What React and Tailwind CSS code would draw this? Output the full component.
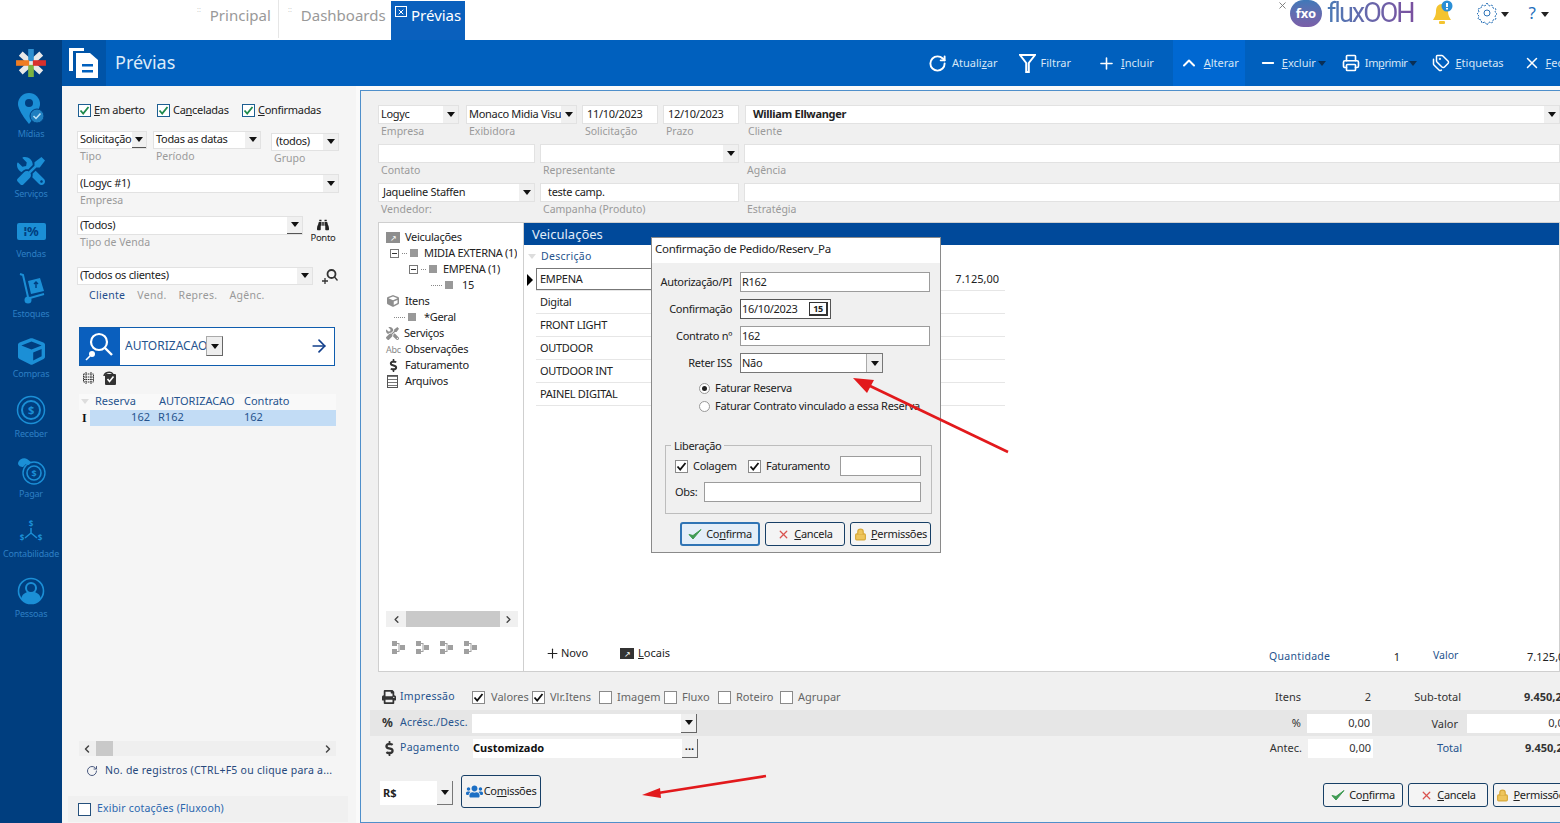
import React from "react";
import { RotateCw, Plus, ChevronUp, Minus, Printer, Tags, X, ArrowRight, ChevronLeft, ChevronRight, Lock } from "lucide-react";
import { FaTools, FaCube, FaBinoculars, FaDollarSign, FaUsers, FaPrint } from "react-icons/fa";

const Caret = ({ className = "" }) => (
  <svg width="8" height="5" viewBox="0 0 8 5" className={className}>
    <path d="M0 0h8L4 5z" fill="currentColor" />
  </svg>
);

const Mark = ({ color = "#1f8a4c" }) => (
  <svg width="11" height="11" viewBox="0 0 11 11">
    <path d="M1.5 5.5 4.2 8.5 9.5 2" fill="none" stroke={color} strokeWidth="1.8" />
  </svg>
);

// caixa de selecao azul do painel de filtros
const BlueCheck = ({ checked = true, children, w }) => (
  <label className="flex items-center gap-[3px] text-[11px] text-[#222]" style={{ width: w }}>
    <span className="w-[13px] h-[13px] border border-[#1d5f92] bg-white flex items-center justify-center">
      {checked && <Mark />}
    </span>
    <span>{children}</span>
  </label>
);

// caixa de selecao cinza, padrao do windows
const GrayCheck = ({ checked, children, className = "" }) => (
  <label className={`flex items-center gap-[5px] text-[11px] ${className}`}>
    <span className="w-[13px] h-[13px] border border-[#8a8a8a] bg-white flex items-center justify-center">
      {checked && <Mark color="#111" />}
    </span>
    <span>{children}</span>
  </label>
);

const Combo = ({ w, h = 19, children, arrow = 15, raised, className = "" }) => (
  <div
    className={`flex items-center bg-white border border-[#e2e2e2] shrink-0 ${className}`}
    style={{ width: w, height: h }}
  >
    <span className="flex-1 min-w-0 pl-[2px] text-[11px] text-[#222] whitespace-nowrap overflow-hidden">{children}</span>
    {arrow > 0 && (
      <span
        className={`h-full flex items-center justify-center text-[#111] bg-[#f0f0f0] ${raised ? "border-b border-[#555]" : ""}`}
        style={{ width: arrow }}
      >
        <Caret />
      </span>
    )}
  </div>
);

const Field = ({ w, text, label, arrow = 0, bold, pad = 0, h = 39 }) => (
  <div className="flex flex-col shrink-0" style={{ width: w, height: h }}>
    <Combo w={w} arrow={arrow}>
      <span className={bold ? "font-bold" : ""} style={{ paddingLeft: pad }}>{text}</span>
    </Combo>
    <span className="pl-[3px] text-[10.5px] leading-[13px] tracking-normal mt-[1px] text-[#9a9a9a]">{label}</span>
  </div>
);

const Label = ({ children }) => (
  <span className="block text-[10.5px] leading-[13px] tracking-normal text-[#9a9a9a] pl-[3px] mt-[1px]">{children}</span>
);

const Btn = ({ w, active, icon, children }) => (
  <button
    className={`h-[24px] flex items-center justify-center gap-[4px] rounded-[3px] text-[11px] text-[#222] shrink-0 ${
      active ? "border-2 border-[#2f74b5] bg-[#e4eef8]" : "border border-[#173f66] bg-[#f4f4f4]"
    }`}
    style={{ width: w }}
  >
    {icon}
    <span>{children}</span>
  </button>
);

const OkIcon = () => (
  <svg width="14" height="12" viewBox="0 0 14 12">
    <path d="M1 6.5 5 11 13 1.5 5 7.5z" fill="#3e9a52" stroke="#3e9a52" strokeWidth="1" />
  </svg>
);
const NoIcon = () => <X size={13} strokeWidth={2.4} className="text-[#d9534f]" />;
const LockIcon = () => <Lock size={13} strokeWidth={2.2} className="text-[#d8a93a]" fill="#eec55c" />;

const SideItem = ({ label, children }) => (
  <div className="h-[60px] shrink-0 flex flex-col items-center justify-end">
    <div className="flex-1 flex items-end justify-center pb-[3px]">{children}</div>
    <span className="text-[9px] leading-[12px] tracking-[-0.2px] mb-[11px] text-[#2d7fc4] whitespace-nowrap">{label}</span>
  </div>
);

const Sidebar = () => (
  <aside className="w-[62px] shrink-0 bg-[#003e7f] flex flex-col overflow-hidden">
    <div className="h-[46px] mb-[5px] shrink-0 flex items-center justify-center">
      <svg width="30" height="28" viewBox="0 0 32 30">
        <path d="M5 5 27 25M27 5 5 25" stroke="#e8e8e8" strokeWidth="6" />
        <rect x="13" y="0" width="6" height="13" fill="#2d8fd0" />
        <rect x="13" y="17" width="6" height="13" fill="#7cb342" />
        <rect x="0" y="12" width="14" height="6" fill="#ef7d22" />
        <rect x="18" y="12" width="14" height="6" fill="#d9302c" />
      </svg>
    </div>
    <SideItem label="Mídias">
      <svg width="28" height="32" viewBox="0 0 28 32">
        <path d="M12 0a11 11 0 0 1 11 11c0 7-11 20-11 20S1 18 1 11A11 11 0 0 1 12 0z" fill="#1b8fd6" />
        <circle cx="12" cy="10" r="4" fill="#003e7f" />
        <circle cx="20" cy="23" r="7" fill="#1f7fc0" stroke="#003e7f" />
        <path d="M16.5 23l2.5 2.5 4.5-5" fill="none" stroke="#bfe3f7" strokeWidth="1.5" />
      </svg>
    </SideItem>
    <SideItem label="Serviços">
      <FaTools size={28} className="text-[#1b8fd6] -scale-x-100" />
    </SideItem>
    <SideItem label="Vendas">
      <div className="w-[29px] h-[17px] mb-[5px] rounded-[2px] bg-[#1b8fd6] text-[#003e7f] text-[13px] leading-[17px] font-bold text-center">⁞%</div>
    </SideItem>
    <SideItem label="Estoques">
      <svg width="28" height="32" viewBox="0 0 28 32">
        <path d="M3 1l3 1 5 22" fill="none" stroke="#1b8fd6" strokeWidth="2" />
        <circle cx="11" cy="27" r="3.5" fill="#1b8fd6" />
        <path d="M13 25 27 21" stroke="#1b8fd6" strokeWidth="2" />
        <path d="M11 8 23 5 27 18 14 21z" fill="#1b8fd6" />
        <path d="M19 9v6M17 11l2-2 2 2" fill="none" stroke="#003e7f" strokeWidth="1.4" />
      </svg>
    </SideItem>
    <SideItem label="Compras">
      <FaCube size={27} className="text-[#1b8fd6]" />
    </SideItem>
    <SideItem label="Receber">
      <svg width="30" height="30" viewBox="0 0 30 30">
        <circle cx="15" cy="15" r="13.5" fill="none" stroke="#1b8fd6" strokeWidth="1.5" />
        <circle cx="15" cy="15" r="9" fill="none" stroke="#1b8fd6" strokeWidth="2" />
        <text x="15" y="19" textAnchor="middle" fontSize="11" fontWeight="700" fill="#1b8fd6">$</text>
      </svg>
    </SideItem>
    <SideItem label="Pagar">
      <svg width="30" height="30" viewBox="0 0 30 30">
        <path d="M2 8c1-4 6-6 9-4l4 3-2 3-3-1-3 3C5 12 2 11 2 8z" fill="#1b8fd6" />
        <circle cx="18" cy="18" r="11" fill="none" stroke="#1b8fd6" strokeWidth="1.4" />
        <circle cx="18" cy="18" r="7" fill="none" stroke="#1b8fd6" strokeWidth="1.6" />
        <text x="18" y="21.5" textAnchor="middle" fontSize="9" fontWeight="700" fill="#1b8fd6">$</text>
      </svg>
    </SideItem>
    <SideItem label="Contabilidade">
      <svg width="26" height="26" viewBox="0 0 26 26">
        <path d="M13 9v5L7 19M13 14l6 5" fill="none" stroke="#1b8fd6" strokeWidth="1.5" />
        <text x="13" y="8" textAnchor="middle" fontSize="8" fontWeight="700" fill="#1b8fd6">$</text>
        <text x="4" y="22" textAnchor="middle" fontSize="8" fontWeight="700" fill="#1b8fd6">$</text>
        <text x="22" y="22" textAnchor="middle" fontSize="8" fontWeight="700" fill="#1b8fd6">$</text>
      </svg>
    </SideItem>
    <SideItem label="Pessoas">
      <svg width="28" height="28" viewBox="0 0 28 28">
        <circle cx="14" cy="14" r="12.5" fill="none" stroke="#1b8fd6" strokeWidth="1.6" />
        <circle cx="14" cy="11" r="5" fill="none" stroke="#1b8fd6" strokeWidth="2" />
        <path d="M4 22c1-5 5-7 7-7h6c2 0 6 2 7 7-3 3-6 5-10 5s-7-2-10-5z" fill="#1b8fd6" />
      </svg>
    </SideItem>
  </aside>
);

const TopBar = () => (
  <div className="h-10 flex items-start bg-white shrink-0 relative tracking-normal">
    <div className="pl-[197px] flex h-full">
      <div className="flex pt-[6px] border-r border-[#e6e6e6] w-[82px] h-[38px]">
        <span className="text-[7px] leading-[7px] text-[#ccc] mr-[9px]">::</span>
        <span className="text-[15px] leading-[19px] text-[#999]">Principal</span>
      </div>
      <div className="flex pt-[6px] pl-[9px] w-[112px]">
        <span className="text-[7px] leading-[7px] text-[#ccc] mr-[9px]">::</span>
        <span className="text-[15px] leading-[19px] text-[#999]">Dashboards</span>
      </div>
      <div className="mt-[1px] h-[39px] w-[74px] bg-[#0a60bd] flex items-start pl-[4px] pt-[4px] gap-[4px]">
        <span className="mt-[1px] w-[12px] h-[11px] border border-white flex items-center justify-center">
          <X size={8} strokeWidth={3} className="text-white" />
        </span>
        <span className="text-[15px] leading-[20px] text-white">Prévias</span>
      </div>
    </div>
    <div className="ml-auto flex items-start h-full pr-[11px]">
      <X size={11} className="text-[#777] mr-[2px] mt-0" />
      <div className="w-[32px] h-[27px] rounded-full bg-gradient-to-b from-[#3f78b8] to-[#7a5fa8] text-white text-[13px] font-bold flex items-center justify-center">fxo</div>
      <span className="ml-[5px] text-[27px] leading-[27px] font-['Roboto',sans-serif] font-normal tracking-[-2px] bg-gradient-to-r from-[#4a7ab5] to-[#7a4f9f] bg-clip-text text-transparent pr-[2px]">fluxOOH</span>
      <svg width="24" height="26" viewBox="0 0 24 26" className="ml-[15px]">
        <path d="M11 4c-4 0-6 3-6 7 0 5-2 7-3 9h18c-1-2-3-4-3-9 0-4-2-7-6-7z" fill="#f4c430" />
        <rect x="8" y="21" width="6" height="3" rx="1" fill="#f4c430" />
        <circle cx="16" cy="6" r="5.5" fill="#2b8fd6" />
        <rect x="15" y="3" width="2" height="4" fill="#fff" />
        <rect x="15" y="8" width="2" height="1.5" fill="#fff" />
      </svg>
      <svg width="24" height="24" viewBox="0 0 24 24" className="ml-[20px] mt-[1px] text-[#2a72b8]">
        <circle cx="12" cy="12" r="3" fill="none" stroke="currentColor" />
        <path d="M12 2l2 3 3-1 1 3 3 1-1 3 2 2-2 2 1 3-3 1-1 3-3-1-2 3-2-3-3 1-1-3-3-1 1-3-2-2 2-2-1-3 3-1 1-3 3 1z" fill="none" stroke="currentColor" strokeDasharray="2 1" />
      </svg>
      <Caret className="mt-[12px] ml-[2px] text-[#222]" />
      <span className="ml-[20px] mt-[2px] text-[17px] leading-[22px] text-[#1f6fbd]">?</span>
      <Caret className="mt-[12px] ml-[5px] text-[#222]" />
    </div>
  </div>
);

const Tool = ({ icon, children, caret, active, ml = 0, w }) => (
  <div
    className={`h-full flex items-center gap-[5px] shrink-0 text-[11px] tracking-normal text-[#d6e6f6] ${active ? "bg-[#0068d2] justify-center" : ""}`}
    style={{ marginLeft: ml, width: w }}
  >
    {icon}
    <span className="whitespace-nowrap">{children}</span>
    {caret && <Caret className="-ml-[3px] text-[#0a2f55]" />}
  </div>
);

const Funnel = () => (
  <svg width="17" height="19" viewBox="0 0 17 19" className="text-white">
    <path d="M1 1h15L9.8 9v9H7.2V9z" fill="none" stroke="currentColor" strokeWidth="2" />
  </svg>
);

const Header = () => (
  <header className="h-[46px] shrink-0 bg-[#0060be] flex items-stretch overflow-hidden">
    <div className="w-[44px] shrink-0 bg-[#0054a8] flex items-center justify-center">
      <svg width="32" height="32" viewBox="0 0 32 32">
        <path d="M1 1h15v3H5v20H1z" fill="#fff" />
        <path d="M8 6h14l8 7v18H8z" fill="#fff" />
        <rect x="14" y="17" width="11" height="2.5" fill="#0060be" />
        <rect x="14" y="23" width="11" height="2.5" fill="#0060be" />
      </svg>
    </div>
    <div className="w-[700px] pl-[9px] pb-[2px] shrink-0 flex items-center text-[18px] tracking-normal text-[#dcebf9]">Prévias</div>
    <nav className="flex items-stretch ml-[122px] shrink-0">
      <Tool icon={<RotateCw size={19} strokeWidth={2.4} className="text-white" />}>Atuali<u>z</u>ar</Tool>
      <Tool ml={21} icon={<Funnel />}>Filtrar</Tool>
      <Tool ml={26} icon={<Plus size={19} strokeWidth={2} className="text-white" />}><u>I</u>ncluir</Tool>
      <Tool ml={19} w={72} active icon={<ChevronUp size={20} strokeWidth={2.4} className="text-white" />}><u>A</u>lterar</Tool>
      <Tool ml={14} icon={<Minus size={18} strokeWidth={2.4} className="text-white" />} caret><u>E</u>xcluir</Tool>
      <Tool ml={16} icon={<Printer size={18} strokeWidth={2.2} className="text-white" />} caret><span className="tracking-[-0.4px]">Im<u>p</u>rimir</span></Tool>
      <Tool ml={15} icon={<Tags size={18} strokeWidth={2} className="text-white" />}><u>E</u>tiquetas</Tool>
      <Tool ml={19} icon={<X size={18} strokeWidth={2} className="text-white" />}><u>F</u>echar</Tool>
    </nav>
  </header>
);

const LeftPanel = () => (
  <section className="w-[298px] shrink-0 bg-[#f5f5f5] border-r-4 border-[#fafafa] flex flex-col pl-[15px] pb-[1px]">
    <div className="flex mt-[16px] pl-[1px]">
      <BlueCheck w={79}><u>E</u>m aberto</BlueCheck>
      <BlueCheck w={85}>Ca<u>n</u>celadas</BlueCheck>
      <BlueCheck w={90}><u>C</u>onfirmadas</BlueCheck>
    </div>
    <div className="flex mt-[12px] h-[32px]">
      <div className="w-[76px]">
        <Combo w={70} h={18} arrow={14} raised>Solicitação</Combo>
        <Label>Tipo</Label>
      </div>
      <div className="w-[118px]">
        <Combo w={108} h={18}>Todas as datas</Combo>
        <Label>Período</Label>
      </div>
      <div className="mt-[2px]">
        <Combo w={68} h={18}><span className="pl-[2px]">(todos)</span></Combo>
        <Label>Grupo</Label>
      </div>
    </div>
    <div className="mt-[11px]">
      <Combo w={262}>(Logyc #1)</Combo>
      <Label>Empresa</Label>
    </div>
    <div className="flex mt-[9px] h-[33px]">
      <div>
        <Combo w={226} raised>(Todos)</Combo>
        <Label>Tipo de Venda</Label>
      </div>
      <div className="ml-[7px] mt-[3px] flex flex-col items-center text-[#222] w-[26px]">
        <FaBinoculars size={12} />
        <span className="text-[9.5px] leading-[12px] mt-[1px]">Ponto</span>
      </div>
    </div>
    <div className="flex items-center mt-[18px]">
      <Combo w={236} h={18}>(Todos os clientes)</Combo>
      <svg width="16" height="16" viewBox="0 0 16 16" className="ml-[9px] text-[#333]">
        <circle cx="9.5" cy="6" r="4" fill="none" stroke="currentColor" strokeWidth="1.8" />
        <path d="M12.5 9l3 3.5M0 13h6M3 10v6" stroke="currentColor" strokeWidth="1.3" />
      </svg>
    </div>
    <div className="flex mt-[4px] pl-[12px] text-[10.5px] leading-[13px] tracking-[0.3px] text-[#999] gap-[12px]">
      <span className="text-[#1f4e8c]">Cliente</span>
      <span>Vend.</span>
      <span>Repres.</span>
      <span>Agênc.</span>
    </div>
    <div className="ml-[2px] mt-[25px] w-[256px] h-[39px] shrink-0 border border-[#0f5dae] bg-white flex items-center">
      <div className="w-[40px] h-full bg-[#0a5fbe] flex items-center justify-center">
        <svg width="32" height="32" viewBox="0 0 32 32">
          <circle cx="15" cy="12" r="8" fill="none" stroke="#fff" strokeWidth="2.2" />
          <path d="M21 18l7 7" stroke="#fff" strokeWidth="2.4" />
          <circle cx="8" cy="24" r="3" fill="#fff" />
          <path d="M2 30l4-4" stroke="#fff" strokeWidth="1.6" />
        </svg>
      </div>
      <span className="ml-[5px] w-[81px] overflow-hidden whitespace-nowrap text-[12px] tracking-normal text-[#26548e]">AUTORIZACAO</span>
      <span className="w-[17px] h-[20px] bg-[#eee] border border-[#aaa] border-r-[#666] border-b-[#666] flex items-center justify-center text-[#111]">
        <Caret />
      </span>
      <ArrowRight size={20} strokeWidth={2} className="ml-auto mr-[5px] text-[#123f8c]" />
    </div>
    <div className="flex h-[15px] mt-[5px] pl-[5px] gap-[8px] text-[#333]">
      <svg width="13" height="14" viewBox="0 0 13 14">
        <path d="M1.5 3h10v8h-10zM1.5 6h10M1.5 8.5h10M4 1v12M9 1v12" fill="none" stroke="currentColor" strokeWidth="1" strokeDasharray="1.5 .7" />
      </svg>
      <svg width="14" height="14" viewBox="0 0 14 14">
        <rect x="2" y="3" width="11" height="11" rx="1" fill="currentColor" />
        <path d="M1 5a5 4 0 0 1 9-2" fill="none" stroke="currentColor" strokeWidth="1.5" />
        <path d="M4.5 8l2 2.5 4-5" fill="none" stroke="#fff" strokeWidth="1.6" />
      </svg>
    </div>
    <div className="ml-[2px] mt-[8px] w-[257px] text-[11px] tracking-normal">
      <div className="flex h-[16px] items-center text-[#26548e] bg-[#f9f9f9]">
        <span className="w-[11px] flex justify-center text-[#ddd]"><Caret /></span>
        <span className="w-[65px] pl-[5px]">Reserva</span>
        <span className="w-[85px] pl-[4px]">AUTORIZACAO</span>
        <span className="pl-[4px]">Contrato</span>
      </div>
      <div className="flex h-[16px] items-center text-[#26548e]">
        <span className="w-[11px] pl-[3px] text-[12px] font-['Liberation_Serif',serif] font-bold text-[#111]">I</span>
        <div className="flex-1 h-full bg-[#c2dcf5] flex items-center">
          <span className="w-[60px] text-right">162</span>
          <span className="w-[85px] pl-[8px]">R162</span>
          <span className="pl-[9px]">162</span>
        </div>
      </div>
    </div>
    <div className="mt-auto ml-[2px] w-[257px] h-[15px] bg-[#efefef] flex items-center">
      <ChevronLeft size={12} strokeWidth={3} className="ml-[2px] text-[#444]" />
      <span className="ml-[3px] w-[17px] h-full bg-[#c9c9c9]" />
      <ChevronRight size={12} strokeWidth={3} className="ml-auto mr-[2px] text-[#444]" />
    </div>
    <div className="flex items-center h-[14px] mt-[8px] pl-[9px] gap-[7px] text-[10.5px] tracking-[0.25px] text-[#26487c] whitespace-nowrap">
      <RotateCw size={12} strokeWidth={2} className="text-[#4a5a80]" />
      <span>No. de registros (CTRL+F5 ou clique para a...</span>
    </div>
    <div className="-ml-[9px] w-[280px] h-[26px] mt-[18px] bg-[#f0f0f0] flex items-center pl-[10px] gap-[6px] text-[10.5px] tracking-[0.2px] text-[#2a66ae]">
      <span className="w-[13px] h-[13px] border border-[#25507c] bg-white" />
      <span>Exibir cotações (Fluxooh)</span>
    </div>
  </section>
);

const TreeIcon = () => <span className="inline-block w-[8px] h-[8px] bg-[#999] shrink-0" />;
const Expander = () => (
  <span className="w-[9px] h-[9px] border border-[#777] bg-white shrink-0 flex items-center justify-center">
    <span className="w-[5px] h-px bg-[#333]" />
  </span>
);
const Dots = ({ w = 5 }) => <span className="border-t border-dotted border-[#888] shrink-0" style={{ width: w }} />;

const TreeRow = ({ pad, children }) => (
  <div className="h-[16px] flex items-center gap-[3px] text-[11px] text-[#222] whitespace-nowrap" style={{ paddingLeft: pad }}>
    {children}
  </div>
);

const Tree = () => (
  <div className="w-[145px] shrink-0 border-r border-[#cfcfcf] flex flex-col pt-[6px]">
    <TreeRow pad={7}>
      <span className="w-[14px] h-[11px] bg-[#8e8e8e] text-white text-[8px] leading-[11px] text-center shrink-0 mr-[2px]">↗</span>Veiculações
    </TreeRow>
    <TreeRow pad={11}>
      <Expander /><Dots /><TreeIcon /><span className="ml-[3px] w-[93px] overflow-hidden">MIDIA EXTERNA (1)</span>
    </TreeRow>
    <TreeRow pad={30}>
      <Expander /><Dots /><TreeIcon /><span className="ml-[3px]">EMPENA (1)</span>
    </TreeRow>
    <TreeRow pad={52}>
      <Dots w={11} /><TreeIcon /><span className="ml-[6px]">15</span>
    </TreeRow>
    <TreeRow pad={8}>
      <FaCube size={12} className="text-[#8e8e8e] mr-[3px]" />Itens
    </TreeRow>
    <TreeRow pad={15}>
      <Dots w={11} /><TreeIcon /><span className="ml-[5px]">*Geral</span>
    </TreeRow>
    <TreeRow pad={7}>
      <FaTools size={13} className="text-[#8e8e8e] mr-[2px] -scale-x-100" />Serviços
    </TreeRow>
    <TreeRow pad={7}>
      <span className="w-[14px] text-[9px] leading-[11px] text-[#888] mr-[2px] shrink-0">Abc</span>Observações
    </TreeRow>
    <TreeRow pad={9}>
      <FaDollarSign size={13} className="text-[#333] mr-[2px] -ml-[1px]" />Faturamento
    </TreeRow>
    <TreeRow pad={8}>
      <span className="w-[11px] h-[13px] border border-[#555] bg-[repeating-linear-gradient(#777_0_1px,#fff_1px_3px)] mr-[4px] shrink-0" />Arquivos
    </TreeRow>
    <div className="mt-auto mx-[7px] w-[132px] h-[16px] bg-[#f0f0f0] flex items-center justify-between">
      <ChevronLeft size={11} strokeWidth={3} className="ml-[5px] text-[#444] shrink-0" />
      <span className="w-[94px] h-full bg-[#c9c9c9]" />
      <ChevronRight size={11} strokeWidth={3} className="mr-[4px] text-[#444] shrink-0" />
    </div>
    <div className="flex h-[14px] mt-[14px] mb-[16px] pl-[13px] gap-[10px]">
      {[0, 1, 2, 3].map((i) => (
        <svg key={i} width="14" height="14" viewBox="0 0 14 14">
          <rect x="0" y="0" width="5" height="5" fill="#a0a0a0" />
          <rect x="0" y="8" width="5" height="5" fill="#a0a0a0" />
          <rect x="8" y="4" width="5" height="5" fill="#a0a0a0" />
          <path d="M5 2.5h2M5 10.5h2M7 2v9" stroke="#a0a0a0" />
        </svg>
      ))}
    </div>
  </div>
);

const rows = ["Digital", "FRONT LIGHT", "OUTDOOR", "OUTDOOR INT", "PAINEL DIGITAL"];

const Veiculacoes = () => (
  <div className="flex-1 min-w-0 flex flex-col text-[11px] text-[#222]">
    <div className="h-[22px] bg-[#00499a] text-[13px] leading-[22px] tracking-normal text-[#e0ecf8] pl-[8px] shrink-0">Veiculações</div>
    <div className="h-[23px] flex items-center text-[#26548e] shrink-0">
      <span className="w-[17px] pl-[4px] text-[#ddd]"><Caret /></span>
      <span className="text-[10.5px] tracking-[0.3px]">Descrição</span>
    </div>
    <div className="w-[481px] shrink-0">
      <div className="h-[23px] flex items-center">
        <svg width="12" height="12" viewBox="0 0 12 12" className="shrink-0">
          <path d="M3 0l6 6-6 6z" fill="#000" />
        </svg>
        <div className="flex-1 h-full flex items-center pr-[6px] border-b border-[#e6e6e6]">
          <span className="w-[120px] h-full border border-[#777] flex items-center pl-[3px]">EMPENA</span>
          <span className="ml-auto tracking-normal">7.125,00</span>
        </div>
      </div>
      {rows.map((row) => (
        <div key={row} className="h-[23px] ml-[12px] pl-[4px] flex items-center border-b border-[#e6e6e6]">{row}</div>
      ))}
    </div>
    <div className="mt-auto mb-[5px] h-[18px] flex items-center tracking-normal">
      <span className="ml-[21px] flex items-center gap-[1px] -mt-[8px] shrink-0">
        <Plus size={15} strokeWidth={1.8} />
        <span>Novo</span>
      </span>
      <span className="ml-[32px] flex items-center gap-[4px] -mt-[8px] shrink-0">
        <span className="w-[14px] h-[11px] bg-[#333] text-white text-[8px] leading-[11px] text-center">↗</span>
        <span><u>L</u>ocais</span>
      </span>
      <span className="ml-[599px] w-[70px] shrink-0 text-[#26548e] text-[10.5px] tracking-[0.3px]">Quantidade</span>
      <span className="w-[61px] shrink-0 text-right">1</span>
      <span className="ml-[33px] w-[60px] shrink-0 text-[#26548e] text-[10.5px] -mt-[2px]">Valor</span>
      <span className="ml-[34px] shrink-0 whitespace-nowrap">7.125,00</span>
    </div>
  </div>
);

const White = ({ w, children }) => (
  <span className="h-[19px] bg-white flex items-center justify-end pr-[2px] text-[11px] shrink-0" style={{ width: w }}>{children}</span>
);

const Footer = () => (
  <div className="flex-1 flex flex-col pt-[16px] text-[11px] tracking-normal text-[#333] whitespace-nowrap">
    <div className="h-[18px] flex items-center pl-[21px] -mr-[8px]">
      <FaPrint size={14} className="text-[#333] shrink-0" />
      <span className="ml-[4px] w-[72px] text-[#26548e] text-[10.5px] tracking-[0.3px]">Impressão</span>
      <GrayCheck checked className="w-[60px] gap-[6px] text-[#666]">Valores</GrayCheck>
      <GrayCheck checked className="w-[67px] text-[#666]">Vlr.Itens</GrayCheck>
      <GrayCheck className="w-[65px] text-[#666]">Imagem</GrayCheck>
      <GrayCheck className="w-[54px] text-[#666]">Fluxo</GrayCheck>
      <GrayCheck className="w-[62px] text-[#666]">Roteiro</GrayCheck>
      <GrayCheck className="text-[#666]">Agrupar</GrayCheck>
      <span className="ml-auto">Itens</span>
      <span className="w-[70px] text-right">2</span>
      <span className="w-[90px] text-right">Sub-total</span>
      <span className="ml-[63px] font-bold">9.450,20</span>
    </div>
    <div className="ml-[9px] mt-[4px] h-[26px] bg-[#e6e6e6] flex items-center pl-[12px]">
      <span className="w-[18px] text-[12px] font-bold text-[#333]">%</span>
      <span className="w-[72px] text-[#26548e] text-[10.5px] tracking-[0.2px]">Acrésc./Desc.</span>
      <span className="w-[225px] h-[19px] bg-white flex justify-end">
        <span className="w-[16px] h-full bg-[#f0f0f0] border-r border-b border-[#666] flex items-center justify-center text-[#111]"><Caret /></span>
      </span>
      <span className="ml-auto w-[38px] text-right">%</span>
      <span className="ml-[6px]"><White w={65}>0,00</White></span>
      <span className="w-[86px] text-right pt-[2px]">Valor</span>
      <span className="ml-[9px] mr-[-37px]"><White w={130}><span className="pr-[25px]">0,00</span></White></span>
    </div>
    <div className="h-[20px] mt-[2px] flex items-center pl-[21px] -mr-[9px]">
      <FaDollarSign size={15} className="text-[#333] shrink-0" />
      <span className="ml-[3px] w-[73px] text-[#26548e] text-[10.5px] tracking-[0.3px]">Pagamento</span>
      <span className="w-[225px] h-[19px] bg-white flex items-center font-bold text-[#111] pr-0">
        <span className="flex-1">Customizado</span>
        <span className="w-[16px] h-full bg-[#f0f0f0] border-r border-b border-[#666] text-center leading-[14px] font-bold">...</span>
      </span>
      <span className="ml-auto">Antec.</span>
      <span className="ml-[6px]"><White w={65}>0,00</White></span>
      <span className="w-[89px] text-right text-[#26548e]">Total</span>
      <span className="ml-[63px] font-bold">9.450,20</span>
    </div>
    <div className="flex mt-[17px] pl-[19px]">
      <div className="mt-[6px] h-[24px] w-[73px] shrink-0 bg-white flex items-center font-bold text-[#222] pl-[3px]">
        <span className="flex-1">R$</span>
        <span className="w-[16px] h-full bg-[#f0f0f0] border-r border-b border-[#777] flex items-center justify-center text-[#111]"><Caret /></span>
      </div>
      <button className="ml-[8px] w-[80px] h-[33px] shrink-0 rounded-[3px] border border-[#173f66] bg-[#f2f2f2] flex items-center justify-center gap-[1px] text-[11px] text-[#222] tracking-[-0.3px]">
        <FaUsers size={17} className="text-[#1c6fc4]" />
        <span>Co<u>m</u>issões</span>
      </button>
      <div className="ml-[782px] mt-[8px] flex gap-[5px] shrink-0 tracking-[-0.3px]">
        <Btn w={80} icon={<OkIcon />}>Co<u>n</u>firma</Btn>
        <Btn w={80} icon={<NoIcon />}><u>C</u>ancela</Btn>
        <Btn w={80} icon={<LockIcon />}><u>P</u>ermissões</Btn>
      </div>
    </div>
  </div>
);

const RightPanel = () => (
  <section className="w-[1200px] shrink-0 mt-[4px] border-t border-l border-b border-[#4f8fca] bg-[#f0f0f0] flex flex-col overflow-hidden">
    <div className="pl-[17px] pt-[14px]">
      <div className="flex">
        <Field w={81} text="Logyc" label="Empresa" arrow={15} />
        <span className="w-[7px]" />
        <Field w={111} text="Monaco Midia Visual" label="Exibidora" arrow={15} />
        <span className="w-[5px]" />
        <Field w={76} text="11/10/2023" label="Solicitação" pad={2} />
        <span className="w-[5px]" />
        <Field w={76} text="12/10/2023" label="Prazo" pad={2} />
        <span className="w-[6px]" />
        <Field w={815} text="William Ellwanger" label="Cliente" arrow={15} bold pad={5} />
      </div>
      <div className="flex">
        <Field w={157} text="" label="Contato" />
        <span className="w-[5px]" />
        <Field w={199} text="" label="Representante" arrow={15} />
        <span className="w-[5px]" />
        <Field w={816} text="" label="Agência" />
      </div>
      <div className="flex">
        <Field w={157} text="Jaqueline Staffen" label="Vendedor:" arrow={15} pad={2} />
        <span className="w-[5px]" />
        <Field w={199} text="teste camp." label="Campanha (Produto)" pad={5} />
        <span className="w-[5px]" />
        <Field w={816} text="" label="Estratégia" />
      </div>
    </div>
    <div className="ml-[17px] h-[450px] shrink-0 border border-[#cfcfcf] bg-white flex">
      <Tree />
      <Veiculacoes />
    </div>
    <Footer />
  </section>
);

const DlgRow = ({ label, children, mt = 0 }) => (
  <div className="flex items-center" style={{ marginTop: mt }}>
    <span className="w-[88px] text-right text-[11px] text-[#222] pr-[8px] whitespace-nowrap">{label}</span>
    {children}
  </div>
);

const DlgInput = ({ w, h = 19, children }) => (
  <span className="bg-white border border-[#9c9c9c] flex items-center pl-[1px] text-[11px] text-[#222] shrink-0" style={{ width: w, height: h }}>{children}</span>
);

const Radio = ({ on, children }) => (
  <div className="flex items-center h-[18px] gap-[5px] text-[11px] text-[#222] pl-[47px]">
    <span className="w-[11px] h-[11px] rounded-full border border-[#999] bg-white flex items-center justify-center">
      {on && <span className="w-[5px] h-[5px] rounded-full bg-[#222]" />}
    </span>
    <span>{children}</span>
  </div>
);

const Dialog = () => (
  <div className="absolute left-[651px] top-[237px] w-[290px] h-[316px] bg-[#f0f0f0] border border-[#8a8a8a] flex flex-col z-10">
    <div className="h-[25px] shrink-0 bg-white pl-[3px] pb-[3px] flex items-center text-[11.5px] text-[#222]">Confirmação de Pedido/Reserv_Pa</div>
    <DlgRow label="Autorização/PI" mt={9}><DlgInput w={190} h={20}>R162</DlgInput></DlgRow>
    <DlgRow label="Confirmação" mt={7}>
      <span className="w-[91px] h-[20px] bg-white border border-[#555] flex items-center justify-between pl-[1px] pr-[2px] text-[11px] text-[#222]">
        16/10/2023
        <span className="w-[19px] h-[14px] border border-[#333] border-r-2 border-b-2 text-[9px] leading-[12px] text-center font-bold">15</span>
      </span>
    </DlgRow>
    <DlgRow label="Contrato nº" mt={7}><DlgInput w={190} h={20}>162</DlgInput></DlgRow>
    <DlgRow label="Reter ISS" mt={7}>
      <span className="w-[143px] h-[20px] bg-white border border-[#777] flex items-center justify-between pl-[1px] text-[11px] text-[#222]">
        Não
        <span className="w-[16px] h-full bg-[#eee] border-l border-[#aaa] flex items-center justify-center text-[#111]"><Caret /></span>
      </span>
    </DlgRow>
    <div className="mt-[6px]">
      <Radio on>Faturar Reserva</Radio>
      <Radio>Faturar Contrato vinculado a essa Reserva</Radio>
    </div>
    <fieldset className="ml-[13px] mr-[8px] mt-[24px] h-[75px] border border-[#bdbdbd] px-[9px] pt-[4px] min-w-0">
      <legend className="-ml-[4px] px-[3px] text-[11px] leading-[13px] text-[#222]">Liberação</legend>
      <div className="flex items-center h-[20px] text-[#222]">
        <GrayCheck checked className="w-[73px]">Colagem</GrayCheck>
        <GrayCheck checked className="w-[92px]">Faturamento</GrayCheck>
        <DlgInput w={81} h={20} />
      </div>
      <div className="flex items-center mt-[6px] text-[11px] text-[#222]">
        <span className="w-[29px]">Obs:</span>
        <DlgInput w={217} h={20} />
      </div>
    </fieldset>
    <div className="flex gap-[5px] pl-[28px] mt-[8px]">
      <Btn w={80} active icon={<OkIcon />}>Co<u>n</u>firma</Btn>
      <Btn w={80} icon={<NoIcon />}><u>C</u>ancela</Btn>
      <Btn w={81} icon={<LockIcon />}><u>P</u>ermissões</Btn>
    </div>
  </div>
);

// setas vermelhas desenhadas por cima da tela
const Arrows = () => (
  <svg className="absolute inset-0 z-20 pointer-events-none" width="1560" height="823" viewBox="0 0 1560 823">
    <path d="M1008 452 868 385" stroke="#e2191c" strokeWidth="2.6" fill="none" />
    <path d="M853 378 874 380 867 393z" fill="#e2191c" />
    <path d="M766 776 658 793" stroke="#e2191c" strokeWidth="2.6" fill="none" />
    <path d="M642 795 660 788 661 798z" fill="#e2191c" />
  </svg>
);

export default function App() {
  return (
    <div className="relative w-[1560px] h-[823px] overflow-hidden bg-white flex flex-col tracking-[-0.3px] font-['Noto_Sans',sans-serif]">
      <TopBar />
      <div className="flex flex-1 min-h-0">
        <Sidebar />
        <div className="flex-1 min-w-0 flex flex-col bg-[#fafafa]">
          <Header />
          <div className="flex-1 min-h-0 flex">
            <LeftPanel />
            <RightPanel />
          </div>
        </div>
      </div>
      <Dialog />
      <Arrows />
    </div>
  );
}
